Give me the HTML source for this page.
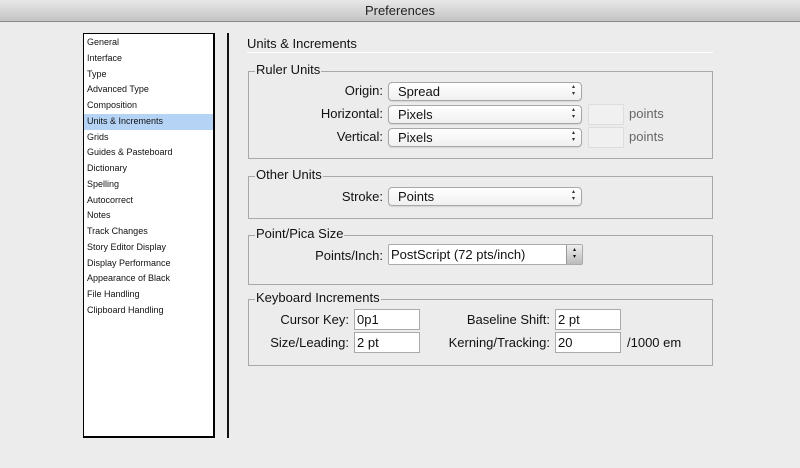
<!DOCTYPE html>
<html><head><style>
*{margin:0;padding:0;box-sizing:border-box}
body{width:800px;height:468px;background:#ececec;font-family:"Liberation Sans",sans-serif;position:relative;overflow:hidden;color:#111}
.a{position:absolute}
#tb{left:0;top:0;width:800px;height:22px;background:linear-gradient(#e8e8e8,#c4c4c4);border-bottom:1px solid #8a8a8a;text-align:center;font-size:13px;line-height:21px;color:#222}
#list{left:83px;top:33px;width:132px;height:405px;background:#fff;border:1px solid #000;border-right:2px solid #000;border-bottom:2px solid #000}
#list div{height:15.75px;font-size:9px;line-height:15.75px;padding-left:3px;color:#111}
#list .sel{background:#b5d3f5}
.vl{left:227px;top:33px;width:2px;height:405px;background:#111}
.grp{border:1px solid #a9a9a9;left:248px;width:465px}
.gt{font-size:13px;background:#ececec;padding:0 1px}
.lbl{font-size:13px;text-align:right}
.sel2{height:19px;background:linear-gradient(#fff,#f0f0f0);border:1px solid #a8a8a8;border-radius:4px;font-size:13px;line-height:17px;padding-left:9px;box-shadow:0 1px 1px rgba(0,0,0,.1)}
.sel2:after{content:"\25B4\A\25BE";white-space:pre;position:absolute;right:6px;top:1px;font-size:6px;line-height:7px;color:#333}
.tf{height:21px;background:#fff;border:1px solid #aaa;font-size:13px;line-height:19px;padding-left:2px}
.dis{background:#f0f0f0;border:1px solid #ddd}
</style></head><body>
<div id="tb" class="a">Preferences</div>
<div id="list" class="a">
<div style="margin-top:1px">General</div><div>Interface</div><div>Type</div><div>Advanced Type</div><div>Composition</div><div class="sel">Units &amp; Increments</div><div>Grids</div><div>Guides &amp; Pasteboard</div><div>Dictionary</div><div>Spelling</div><div>Autocorrect</div><div>Notes</div><div>Track Changes</div><div>Story Editor Display</div><div>Display Performance</div><div>Appearance of Black</div><div>File Handling</div><div>Clipboard Handling</div>
</div>
<div class="a vl"></div>
<div class="a" style="left:247px;top:36px;font-size:13px">Units &amp; Increments</div>
<div class="a" style="left:247px;top:52px;width:466px;height:1px;background:#999;border-bottom:1px solid #fff"></div>

<div class="a grp" style="top:71px;height:88px"></div>
<div class="a gt" style="left:255px;top:62px">Ruler Units</div>
<div class="a lbl" style="left:280px;width:103px;top:83px">Origin:</div>
<div class="a lbl" style="left:280px;width:103px;top:106px">Horizontal:</div>
<div class="a lbl" style="left:280px;width:103px;top:129px">Vertical:</div>
<div class="a sel2" style="left:388px;top:82px;width:194px">Spread</div>
<div class="a sel2" style="left:388px;top:105px;width:194px">Pixels</div>
<div class="a sel2" style="left:388px;top:128px;width:194px">Pixels</div>
<div class="a dis" style="left:588px;top:104px;width:36px;height:21px"></div>
<div class="a dis" style="left:588px;top:127px;width:36px;height:21px"></div>
<div class="a" style="left:629px;top:106px;font-size:13px;color:#666">points</div>
<div class="a" style="left:629px;top:129px;font-size:13px;color:#666">points</div>

<div class="a grp" style="top:176px;height:43px"></div>
<div class="a gt" style="left:255px;top:167px">Other Units</div>
<div class="a lbl" style="left:280px;width:103px;top:189px">Stroke:</div>
<div class="a sel2" style="left:388px;top:187px;width:194px">Points</div>

<div class="a grp" style="top:235px;height:50px"></div>
<div class="a gt" style="left:255px;top:226px">Point/Pica Size</div>
<div class="a lbl" style="left:280px;width:103px;top:248px">Points/Inch:</div>
<div class="a tf" style="left:388px;top:244px;width:195px;height:21px;border-radius:2px">PostScript (72 pts/inch)</div>
<div class="a" style="left:566px;top:245px;width:16px;height:19px;background:linear-gradient(#eee,#bbb);border-left:1px solid #999;font-size:6px;line-height:7px;text-align:center;padding-top:2px;white-space:pre">▴
▾</div>

<div class="a grp" style="top:299px;height:67px"></div>
<div class="a gt" style="left:255px;top:290px">Keyboard Increments</div>
<div class="a lbl" style="left:250px;width:99px;top:312px">Cursor Key:</div>
<div class="a lbl" style="left:250px;width:99px;top:335px">Size/Leading:</div>
<div class="a tf" style="left:354px;top:309px;width:66px">0p1</div>
<div class="a tf" style="left:354px;top:332px;width:66px">2 pt</div>
<div class="a lbl" style="left:420px;width:130px;top:312px">Baseline Shift:</div>
<div class="a lbl" style="left:420px;width:130px;top:335px">Kerning/Tracking:</div>
<div class="a tf" style="left:555px;top:309px;width:66px">2 pt</div>
<div class="a tf" style="left:555px;top:332px;width:66px">20</div>
<div class="a" style="left:627px;top:335px;font-size:13px">/1000 em</div>
</body></html>
